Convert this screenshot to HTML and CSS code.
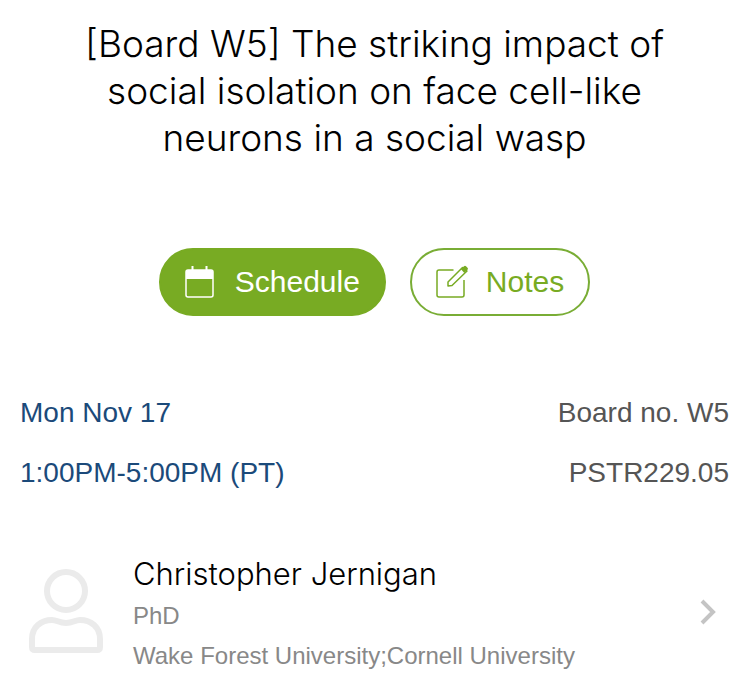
FILE: index.html
```html
<!DOCTYPE html>
<html lang="en">
<head>
<meta charset="utf-8">
<meta name="viewport" content="width=device-width, initial-scale=1">
<title>Session details</title>
<link rel="stylesheet" href="styles.css">
</head>
<body>
<main class="session">
  <h1 class="title">[Board W5] The striking impact of social isolation on face cell-like neurons in a social wasp</h1>
  <div class="actions">
    <button class="button button-filled" type="button">
      <svg class="button-icon" viewBox="0 0 32 34" aria-hidden="true">
        <rect x="1" y="5" width="27" height="27" rx="2" fill="none" stroke="currentColor" stroke-width="1.5"/>
        <path d="M1 14V7q0-2 2-2h23q2 0 2 2v7z" fill="currentColor"/>
        <path d="M7.500 1v5M21.500 1v5" stroke="currentColor" stroke-width="2"/>
      </svg>
      <span>Schedule</span>
    </button>
    <button class="button" type="button">
      <svg class="button-icon" viewBox="0 0 32 34" aria-hidden="true">
        <g fill="none" stroke="currentColor" stroke-width="1.500" stroke-linejoin="round">
          <path d="M17.500 5H3Q1 5 1 7v23q0 2 2 2h23q2 0 2-2V15"/>
          <path d="M12 21v-4L26.500 2.500 31 6 16 20.500z"/>
        </g>
        <path d="M24.800 4 28 1.300q1-1 2 0l1.500 1.500q1 1 0 2L28.300 8z" fill="currentColor"/>
      </svg>
      <span>Notes</span>
    </button>
  </div>
  <div class="details">
    <div class="when"><div>Mon Nov 17</div><div>1:00PM-5:00PM (PT)</div></div>
    <div class="where"><div>Board no. W5</div><div>PSTR229.05</div></div>
  </div>
  <a class="person" href="#">
    <svg class="avatar" viewBox="0 2 76 86" aria-hidden="true">
      <g fill="none" stroke="currentColor" stroke-width="6" stroke-linejoin="round">
        <circle cx="38" cy="22" r="19"/>
        <path d="M4 78V70C4 58 13 51 24 51c5 0 7 3 14 3s9-3 14-3c11 0 20 7 20 19v8q0 3-3 3H7q-3 0-3-3z"/>
      </g>
    </svg>
    <span class="bio">
      <span class="name">Christopher Jernigan</span>
      <span class="note">PhD</span>
      <span class="note">Wake Forest University;Cornell University</span>
    </span>
    <svg class="chevron" viewBox="0 2 16 26" aria-hidden="true">
      <path d="M2 2 13 13 2 24" fill="none" stroke="currentColor" stroke-width="4"/>
    </svg>
  </a>
</main>
</body>
</html>
```
FILE: styles.css
```css
* { box-sizing: border-box; }
body {
  margin: 0;
  background: #fff;
  color: #000;
  font-family: "Liberation Sans", Arial, sans-serif;
}
.session { padding: 20px 20px 8px; }
.title {
  max-width: 620px;
  margin: 0 auto;
  font-family: Inter, "Liberation Sans", sans-serif;
  font-size: 37px;
  font-weight: 300;
  line-height: 47px;
  text-align: center;
}
.actions {
  display: flex;
  justify-content: center;
  gap: 24px;
  margin-top: 87px;
}
.button {
  display: flex;
  align-items: center;
  gap: 18px;
  height: 68px;
  padding: 0 24px;
  border: 2px solid #79ad35;
  border-radius: 34px;
  background: #fff;
  color: #78ab23;
  font: 30px "Liberation Sans", Arial, sans-serif;
}
.button-filled {
  border-color: #78ab23;
  background: #78ab23;
  color: #fff;
}
.button-icon { width: 32px; height: 34px; overflow: visible; }
.details {
  display: flex;
  justify-content: space-between;
  margin-top: 67px;
  font-size: 28px;
  line-height: 60px;
}
.when { color: #1b4a7a; }
.where { color: #555; text-align: right; }
.person {
  display: flex;
  align-items: center;
  margin-top: 49px;
  padding-left: 8px;
  color: inherit;
  text-decoration: none;
}
.avatar { width: 76px; height: 86px; color: #ebebeb; overflow: visible; }
.bio { display: flex; flex: 1; flex-direction: column; margin-left: 29px; }
.name {
  font-family: Inter, "Liberation Sans", sans-serif;
  font-size: 31px;
  font-weight: 300;
  line-height: 44px;
}
.note { color: #888; font-size: 24px; line-height: 40px; }
.chevron { width: 16px; height: 26px; margin-right: 13px; color: #c4c4c4; overflow: visible; }
```
